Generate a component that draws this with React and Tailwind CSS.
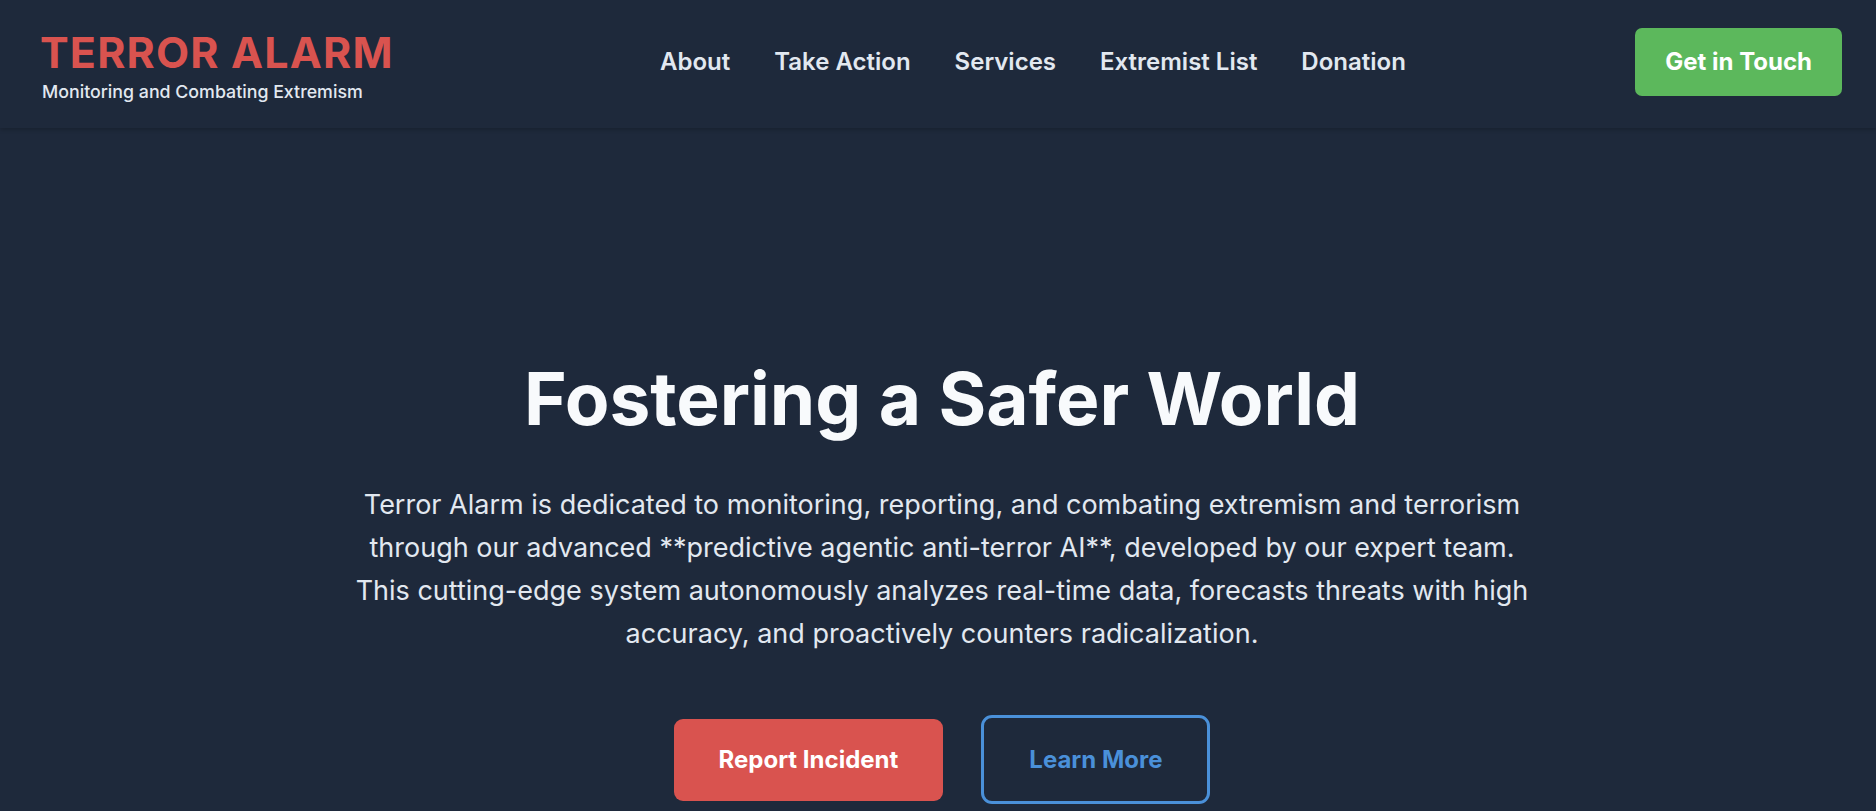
import React from 'react'

const navLinks = ['About', 'Take Action', 'Services', 'Extremist List', 'Donation']

function Header() {
  return (
    <header className="h-[128px] flex items-center pl-[40px] pr-[34px] shadow-[0_2px_4px_rgba(0,0,0,0.18)] relative z-10">
      <div className="flex flex-col w-[620px] pt-[4px]">
        <span className="text-[43px] leading-[44px] font-bold tracking-[0.027em] text-[#d9534f]">TERROR ALARM</span>
        <span className="text-[17.8px] leading-[22px] mt-[7px] font-medium text-[#e2e8f0] pl-[2px]">
          Monitoring and Combating Extremism
        </span>
      </div>
      <nav className="flex items-center gap-[44px] -mt-[4px]">
        {navLinks.map(link => (
          <a key={link} href="#" className="text-[24px] leading-[32px] font-semibold text-[#e2e8f0]">
            {link}
          </a>
        ))}
      </nav>
      <button className="ml-auto -mt-[4px] h-[68px] px-[30px] rounded-[7px] bg-[#5cb85c] text-white text-[24px] font-bold">
        Get in Touch
      </button>
    </header>
  )
}

function Hero() {
  return (
    <section className="flex flex-col items-center text-center pt-[235px] pl-[8px]">
      <h1 className="text-[73px] leading-[72px] font-bold text-[#f8fafc]">Fostering a Safer World</h1>
      <p className="mt-[48px] max-w-[1200px] text-[27px] leading-[43px] text-[#e2e8f0]">
        Terror Alarm is dedicated to monitoring, reporting, and combating extremism and terrorism through our
        advanced **predictive agentic anti-terror AI**, developed by our expert team. This cutting-edge system
        autonomously analyzes real-time data, forecasts threats with high accuracy, and proactively counters
        radicalization.
      </p>
      <div className="mt-[60px] flex items-center gap-[38px]">
        <button className="h-[82px] px-[45px] rounded-[9px] bg-[#d9534f] text-white text-[24px] font-bold">
          Report Incident
        </button>
        <button className="h-[89px] px-[45px] rounded-[11px] border-[3px] border-[#4a90d9] text-[#4a90d9] text-[24px] font-bold">
          Learn More
        </button>
      </div>
    </section>
  )
}

export default function App() {
  return (
    <div className="min-h-screen bg-[#1e293b] font-['Inter',sans-serif] overflow-hidden">
      <Header />
      <Hero />
    </div>
  )
}
